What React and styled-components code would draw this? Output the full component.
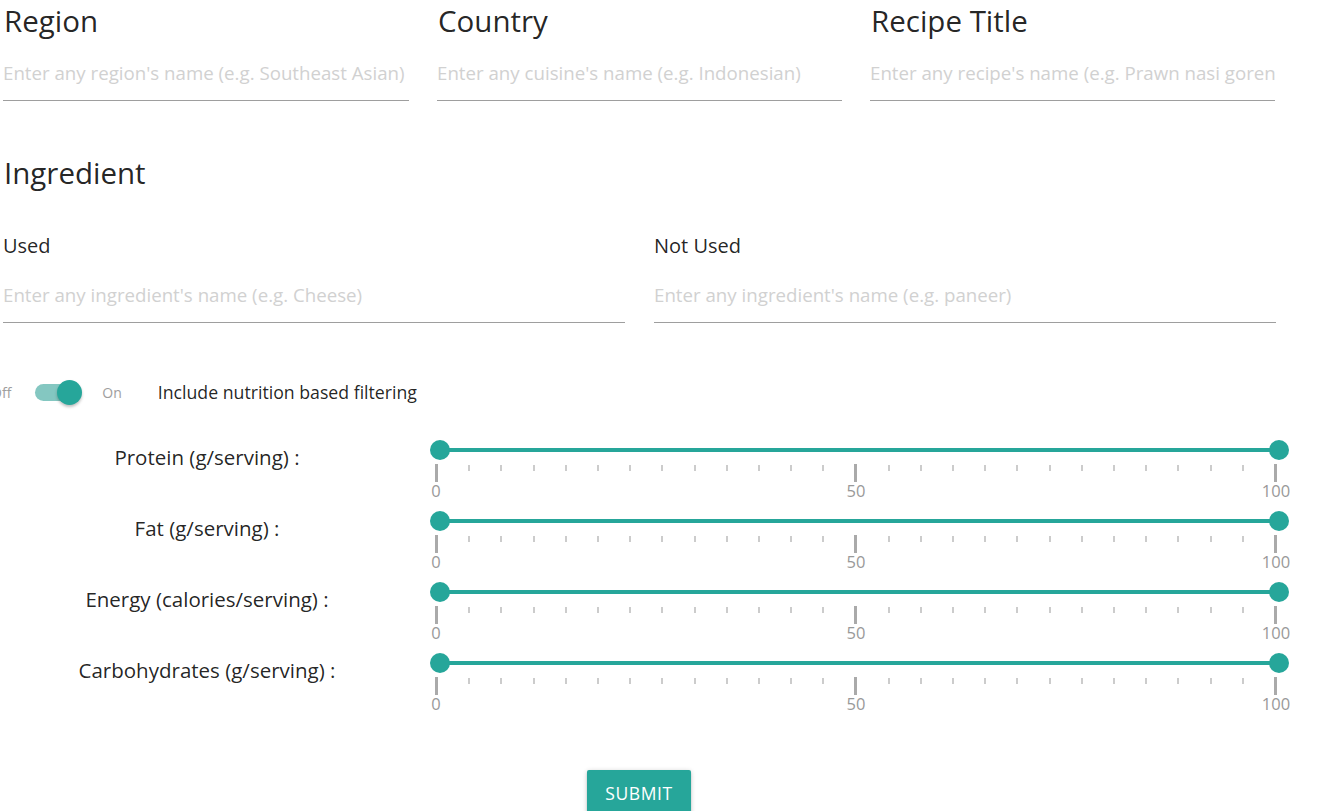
import React, { useState } from 'react';
import styled, { createGlobalStyle } from 'styled-components';

const teal = '#26a69a';

const GlobalStyle = createGlobalStyle`
  body {
    margin: 0;
    background: #fff;
    font-family: 'Open Sans', 'Noto Sans', sans-serif;
    color: rgba(0, 0, 0, 0.87);
    overflow: hidden;
  }
  * { box-sizing: border-box; }
`;

const Page = styled.div`
  padding-left: 3px;
  height: 811px;
  overflow: hidden;
`;

const Row = styled.div`
  display: grid;
  grid-template-columns: ${p => p.cols};
  column-gap: ${p => p.gap || 28}px;
  width: 1273px;
`;

const Field = styled.div`
  display: flex;
  flex-direction: column;
`;

const Heading = styled.h2`
  margin: 0;
  font-size: 29.5px;
  font-weight: 400;
  line-height: 42px;
  padding-left: 1px;
  white-space: nowrap;
`;

const SubLabel = styled.div`
  font-size: 20px;
  line-height: 28px;
  margin-top: ${p => p.top || 0}px;
`;

const Input = styled.input`
  display: block;
  width: 100%;
  height: 48px;
  margin-top: ${p => p.top}px;
  padding: 0 0 8px;
  border: none;
  border-bottom: 1px solid #9e9e9e;
  outline: none;
  font-family: inherit;
  font-size: 18.7px;
  background: transparent;
  &::placeholder {
    color: #d1d1d1;
  }
`;

const Section = styled.div`
  margin-top: 51px;
`;

const SwitchRow = styled.div`
  display: flex;
  align-items: center;
  height: 30px;
  margin-top: 54px;
  margin-left: -12px;
`;

const SwitchText = styled.span`
  font-size: 14px;
  color: #9e9e9e;
`;

const Lever = styled.span`
  position: relative;
  display: inline-block;
  width: 46px;
  height: 17px;
  margin: 0 21px 0 24px;
  border-radius: 9px;
  background: ${p => (p.on ? '#84c7c1' : '#9e9e9e')};
  cursor: pointer;
`;

const Knob = styled.span`
  position: absolute;
  top: -4px;
  left: ${p => (p.on ? '22px' : '-2px')};
  width: 25px;
  height: 25px;
  border-radius: 50%;
  background: ${p => (p.on ? teal : '#f1f1f1')};
  box-shadow: 0 2px 3px rgba(0, 0, 0, 0.25);
`;

const SwitchCaption = styled.span`
  font-size: 17.7px;
  margin-left: 36px;
`;

const Sliders = styled.div`
  margin-top: 33px;
  display: flex;
  flex-direction: column;
  gap: 11px;
`;

const SliderRow = styled.div`
  display: grid;
  grid-template-columns: 408px 885px;
  height: 60px;
`;

const SliderLabel = styled.div`
  font-size: 20.5px;
  line-height: 28px;
  margin-top: 3px;
  text-align: center;
  white-space: nowrap;
`;

const SliderCol = styled.div`
  padding-left: 26px;
`;

const Track = styled.div`
  position: relative;
  width: 839px;
  height: 20px;
  margin-left: 3px;
`;

const TrackLine = styled.div`
  position: absolute;
  top: 8px;
  left: 0;
  right: 0;
  height: 4px;
  background: ${teal};
`;

const Thumb = styled.span`
  position: absolute;
  top: 0;
  width: 20px;
  height: 20px;
  margin-left: -10px;
  border-radius: 50%;
  background: ${teal};
`;

const Ticks = styled.div`
  display: flex;
  justify-content: space-between;
  align-items: flex-start;
  width: 842px;
  height: 18px;
  margin-top: 4px;
  margin-left: -2px;
`;

const Tick = styled.span`
  width: ${p => (p.major ? 3 : 2)}px;
  height: ${p => (p.major ? 18 : 6)}px;
  margin-top: ${p => (p.major ? 0 : 1)}px;
  background: ${p => (p.major ? '#aaa' : '#ccc')};
`;

const Marks = styled.div`
  position: relative;
  width: 840px;
  height: 18px;
  margin-left: -1px;
`;

const Mark = styled.span`
  position: absolute;
  top: 0;
  transform: translateX(-50%);
  font-size: 16.5px;
  line-height: 18px;
  color: #999;
`;

const ButtonRow = styled.div`
  margin-top: 57px;
  padding-left: 584px;
`;

const SubmitButton = styled.button`
  width: 104px;
  height: 46px;
  padding: 0;
  border: none;
  border-radius: 2px;
  background: ${teal};
  color: #fff;
  font-family: inherit;
  font-size: 17.5px;
  letter-spacing: 0.6px;
  text-transform: uppercase;
  cursor: pointer;
  box-shadow: 0 2px 2px 0 rgba(0, 0, 0, 0.14), 0 3px 1px -2px rgba(0, 0, 0, 0.12),
    0 1px 5px 0 rgba(0, 0, 0, 0.2);
`;

const nutrients = [
  'Protein (g/serving) :',
  'Fat (g/serving) :',
  'Energy (calories/serving) :',
  'Carbohydrates (g/serving) :',
];

const tickCount = 27;

function RangeSlider({ label }) {
  return (
    <SliderRow>
      <SliderLabel>{label}</SliderLabel>
      <SliderCol>
        <Track>
          <TrackLine />
          <Thumb style={{ left: '0%' }} />
          <Thumb style={{ left: '100%' }} />
        </Track>
        <Ticks>
          {Array.from({ length: tickCount }).map((_, i) => (
            <Tick key={i} major={i === 0 || i === 13 || i === 26} />
          ))}
        </Ticks>
        <Marks>
          {[0, 50, 100].map(v => (
            <Mark key={v} style={{ left: `${v}%` }}>
              {v}
            </Mark>
          ))}
        </Marks>
      </SliderCol>
    </SliderRow>
  );
}

export default function App() {
  const [nutrition, setNutrition] = useState(true);

  return (
    <>
      <GlobalStyle />
      <Page>
        <Row cols="406px 405px 405px">
          <Field>
            <Heading>Region</Heading>
            <Input top={11} placeholder="Enter any region's name (e.g. Southeast Asian)" />
          </Field>
          <Field>
            <Heading>Country</Heading>
            <Input top={11} placeholder="Enter any cuisine's name (e.g. Indonesian)" />
          </Field>
          <Field>
            <Heading>Recipe Title</Heading>
            <Input top={11} placeholder="Enter any recipe's name (e.g. Prawn nasi goreng)" />
          </Field>
        </Row>

        <Section>
          <Heading>Ingredient</Heading>
          <Row cols="622px 622px" gap={29}>
            <Field>
              <SubLabel top={38}>Used</SubLabel>
              <Input top={15} placeholder="Enter any ingredient's name (e.g. Cheese)" />
            </Field>
            <Field>
              <SubLabel top={38}>Not Used</SubLabel>
              <Input top={15} placeholder="Enter any ingredient's name (e.g. paneer)" />
            </Field>
          </Row>
        </Section>

        <SwitchRow>
          <SwitchText>Off</SwitchText>
          <Lever on={nutrition} onClick={() => setNutrition(!nutrition)}>
            <Knob on={nutrition} />
          </Lever>
          <SwitchText>On</SwitchText>
          <SwitchCaption>Include nutrition based filtering</SwitchCaption>
        </SwitchRow>

        <Sliders>
          {nutrients.map(n => (
            <RangeSlider key={n} label={n} />
          ))}
        </Sliders>

        <ButtonRow>
          <SubmitButton>Submit</SubmitButton>
        </ButtonRow>
      </Page>
    </>
  );
}
